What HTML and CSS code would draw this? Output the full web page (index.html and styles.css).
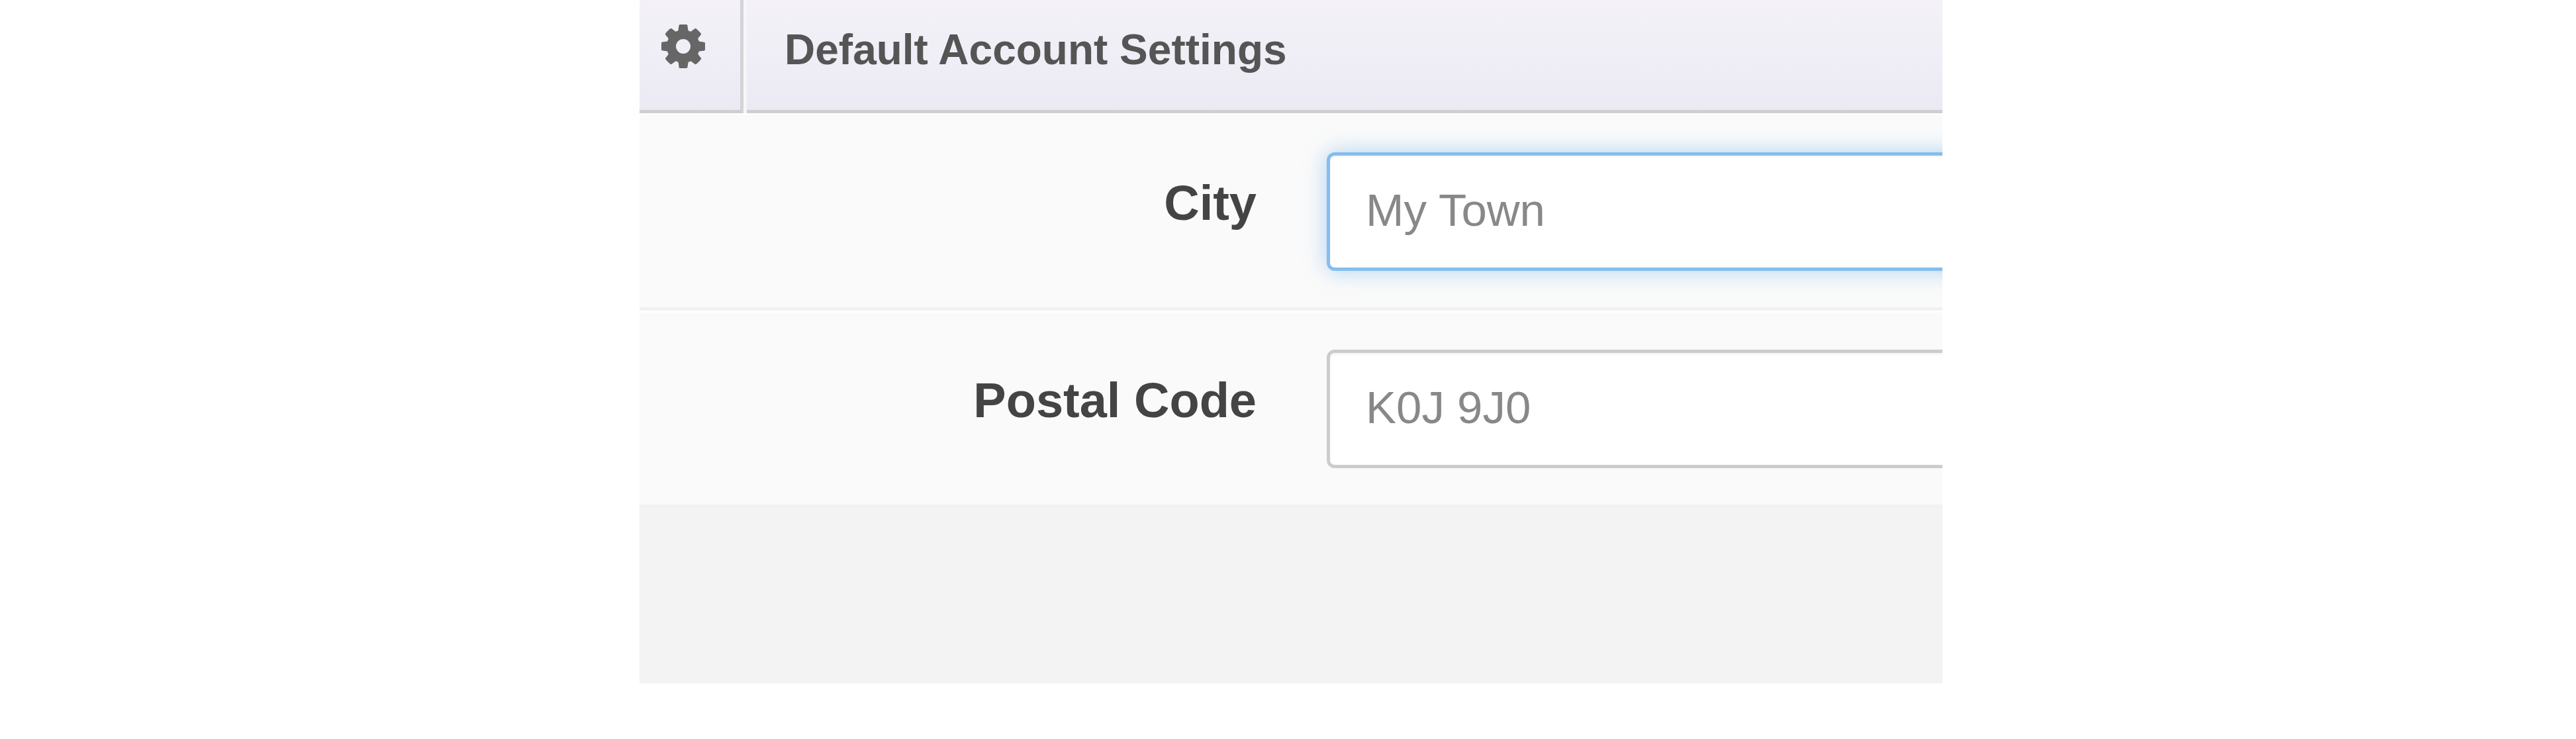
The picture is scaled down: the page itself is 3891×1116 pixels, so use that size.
FILE: index.html
```html
<!DOCTYPE html>
<html lang="en">
<head>
    <meta charset="UTF-8">
    <title>Default Account Settings</title>
    <link rel="stylesheet" href="styles.css">
</head>
<body>
    <div class="panel">
        <div class="panel-head">
            <div class="head-icon">
                <svg class="gear" viewBox="0 0 1536 1536" aria-hidden="true">
                    <path d="M1024 768q0-106-75-181t-181-75-181 75-75 181 75 181 181 75 181-75 75-181zm512-109v222q0 12-8 23t-20 13l-185 28q-19 54-39 91 35 50 107 138 10 12 10 25t-9 23q-27 37-99 108t-94 71q-12 0-26-9l-138-108q-44 23-91 38-16 136-29 186-7 28-36 28h-222q-14 0-24.500-8.500t-11.500-21.500l-28-184q-49-16-90-37l-141 107q-10 9-25 9-14 0-25-11-126-114-165-168-7-10-7-23 0-12 8-23 15-21 51-66.500t54-70.500q-27-50-41-99l-183-27q-13-2-21-12.500t-8-23.500v-222q0-12 8-23t19-13l186-28q14-46 39-92-40-57-107-138-10-12-10-24 0-10 9-23 26-36 98.500-107.500t94.500-71.500q13 0 26 10l138 107q44-23 91-38 16-136 29-186 7-28 36-28h222q14 0 24.500 8.500t11.500 21.500l28 184q49 16 90 37l142-107q9-9 24-9 13 0 25 10 129 119 165 170 7 8 7 22 0 12-8 23-15 21-51 66.500t-54 70.500q26 50 41 98l183 28q13 2 21 12.500t8 23.500z"/>
                </svg>
            </div>
            <h1 class="head-title">Default Account Settings</h1>
        </div>
        <div class="form-row">
            <label class="form-label" for="city">City</label>
            <input id="city" class="form-input is-focus" type="text" placeholder="My Town" />
        </div>
        <div class="form-row">
            <label class="form-label" for="postal">Postal Code</label>
            <input id="postal" class="form-input" type="text" placeholder="K0J 9J0" />
        </div>
    </div>
</body>
</html>
```

FILE: styles.css
```css
body {
    margin: 0;
    padding: 0;
    background-color: #fff;
    font-family: "Liberation Sans", Arial, sans-serif;
}

.panel {
    width: 1968px;
    height: 1032px;
    margin-left: 966px;
    background-color: #f3f3f3;
    overflow: hidden;
}

.panel-head {
    display: flex;
    height: 171px;
    background-color: #f6f5fa;
}

.head-icon {
    box-sizing: border-box;
    display: flex;
    align-items: center;
    justify-content: center;
    width: 157px;
    padding: 0 20px 26px 0;
    background: linear-gradient(to bottom, #f4f2f8, #ebe9f3);
    border-right: 5px solid #d4d3d8;
    border-bottom: 5px solid #cfcfd2;
}

.gear {
    width: 66px;
    height: 66px;
    fill: #666;
}

.head-title {
    box-sizing: border-box;
    flex: 1;
    margin: 0 0 0 5px;
    padding-left: 57px;
    line-height: 150px;
    font-size: 64px;
    font-weight: bold;
    color: #555;
    background: linear-gradient(to bottom, #f4f2f8, #ebe9f3);
    border-bottom: 5px solid #cfcfd2;
}

.form-row {
    display: flex;
    align-items: flex-start;
    padding: 56px 0 55px;
    background-color: #fafafa;
    border-top: 3px solid #fff;
    border-bottom: 5px solid #f1f1f1;
}

.form-label {
    flex-shrink: 0;
    box-sizing: border-box;
    width: 932px;
    text-align: right;
    font-size: 74px;
    font-weight: bold;
    line-height: 153px;
    color: #444;
}

.form-input {
    flex-shrink: 0;
    box-sizing: border-box;
    width: 1100px;
    height: 179px;
    margin-left: 106px;
    padding: 0 54px 4px;
    border: 5px solid #ccc;
    border-radius: 12px;
    background-color: #fff;
    box-shadow: inset 0 3px 3px rgba(0, 0, 0, 0.04);
    font-family: "Liberation Sans", Arial, sans-serif;
    font-size: 69px;
}

.form-input::placeholder {
    color: #888;
    opacity: 1;
}

.is-focus {
    border-color: #85bdee;
    box-shadow: inset 0 3px 3px rgba(0, 0, 0, 0.04), 0 0 32px rgba(110, 175, 235, 0.55);
}
```
